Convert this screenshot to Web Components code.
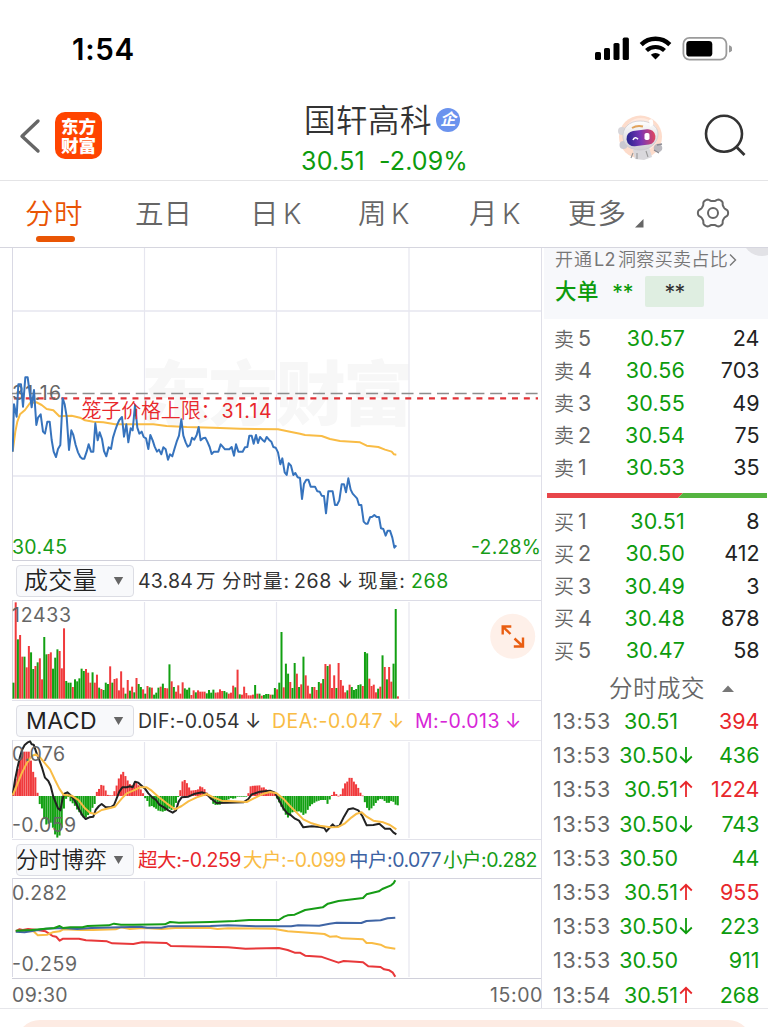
<!DOCTYPE html>
<html lang="zh-CN">
<head>
<meta charset="utf-8">
<title>国轩高科 分时</title>
<style>
html,body{margin:0;background:#fff}
body{width:768px;height:1027px;overflow:hidden;font-family:Inter,"Noto Sans CJK SC",sans-serif;color:#333}
</style>
</head>
<body>
<stock-page></stock-page>
<script>
const define=(name,css,html,after)=>customElements.define(name,class extends HTMLElement{
  connectedCallback(){
    if(this.shadowRoot)return;
    const root=this.attachShadow({mode:'open'});
    root.innerHTML='<style>*{box-sizing:border-box}'+css+'</style>'+(typeof html==='function'?html(this):html);
    if(after)after(this,root);
  }
});

/* Text tracked so that it fills a fixed width */
define('fit-text',':host{display:inline-block;white-space:nowrap;flex:none}','<slot></slot>',el=>{
  const w=+el.getAttribute('w'),r=document.createRange();
  r.selectNodeContents(el);
  const nat=r.getBoundingClientRect().width,n=[...el.textContent].length;
  el.style.letterSpacing=((w-nat)/n).toFixed(3)+'px';
  el.style.width=w+'px';
});
const ft=(t,w,x=0,st='')=>`<fit-text w="${w}" style="margin-left:${x}px;${st}">${t}</fit-text>`;

define('status-bar',`:host{display:flex;height:96px;padding:1px 36px 0 72px;align-items:center;justify-content:space-between;color:#000;font-weight:600;font-size:29.5px}
svg{display:block}`,
`${ft('1:54',63)}<svg width="138" height="26" viewBox="594 36 138 26">
<rect x="595" y="52" width="6" height="8" rx="1.6"/><rect x="604" y="48" width="6" height="12" rx="1.6"/><rect x="613.5" y="43" width="6" height="17" rx="1.6"/><rect x="622.7" y="37.6" width="6.2" height="22.4" rx="1.6"/>
<path d="M641.2 44.6a20.5 20.5 0 0 1 28.6 0" fill="none" stroke="#000" stroke-width="4.4"/><path d="M646.5 50.6a13 13 0 0 1 18 0" fill="none" stroke="#000" stroke-width="4.2"/><path d="M650.8 54.7a7 7 0 0 1 9.4 0L655.5 59.6z"/>
<rect x="683.4" y="37.8" width="43" height="21.8" rx="6" fill="#fff" stroke="#9b9b9b" stroke-width="1.8"/><rect x="686.3" y="41" width="26" height="15.6" rx="3.4"/><path d="M729 45.3q3.4 1 3.4 3.6t-3.4 3.6z" fill="#9b9b9b"/></svg>`);

define('app-logo',`:host{display:grid;width:47px;height:47px;border-radius:10px;background:#ff4400;color:#fff;font-weight:900;font-size:17.5px;line-height:19px;align-content:center;justify-content:center;padding-bottom:0}`,
`${ft('东方',35)}${ft('财富',35)}`);

define('quote-header',`:host{display:flex;height:85px;border-bottom:1px solid #e4e4e6;padding-left:19px;align-items:flex-start}
svg{display:block;flex:none}.back{margin-top:22px}app-logo{margin:16px 0 0 14px;flex:none}
.mid{margin-left:198px;width:170px;flex:none}
.name{display:flex;align-items:center;font-size:31.5px;font-weight:350;height:46px;color:#333;padding-left:4px}
.name fit-text{margin-top:-2px!important}
.badge{width:24px;height:24px;border-radius:50%;background:#6b93ee;color:#fff;font-size:16px;font-weight:700;line-height:23px;text-align:center;margin:2px 0 0 4px;flex:none;font-style:italic}
.px{display:flex;font-size:25px;line-height:32px;color:#0d9b0d;padding:3px 0 0 1px}
.bot{margin:17px 0 0 147px}.sea{margin:18px 0 0 38px}`,
`<svg class="back" width="22" height="36" viewBox="20 118 22 36"><path d="M39 121 23 136.300 39 151" fill="none" stroke="#666" stroke-width="3.400" stroke-linecap="round" stroke-linejoin="round"/></svg>
<app-logo></app-logo>
<div class="mid"><div class="name">${ft('国轩高科',128)}<span class="badge">企</span></div>
<div class="px">${ft('30.51',64)}${ft('-2.09%',89,14)}</div></div>
<svg class="bot" width="48" height="48" viewBox="617 112 48 48"><defs><linearGradient id="v" x1="0" x2="1"><stop offset="0" stop-color="#26238f"/><stop offset=".5" stop-color="#7a36b4"/><stop offset="1" stop-color="#e0455f"/></linearGradient><linearGradient id="h" x1="0" x2="0" y1="0" y2="1"><stop offset="0" stop-color="#fff"/><stop offset="1" stop-color="#cfcdd2"/></linearGradient></defs>
<circle cx="640.500" cy="136" r="21.500" fill="#fddccb"/><circle cx="641" cy="134" r="17" fill="#ffe9de"/>
<path d="M633 149l16-3 3 10-8 3-9-1z" fill="#d9d8dc"/><path d="M633 152l-2 5M637 152v6M646 150l2 6" stroke="#999" stroke-width="1.100"/>
<circle cx="622" cy="130" r="4" fill="#d8d6da"/><circle cx="623.500" cy="144" r="4" fill="#cbc9d0"/>
<path d="M623 137c-1-10 6-17 17-17 10 0 18 5 18 13 0 9-8 16-18 16-9 0-16-4-17-12z" fill="url(#h)" stroke="#c9c6cb" stroke-width=".7"/>
<path d="M649 119q5-3 4 5l-3 2z" fill="#fff"/><path d="M632 127q5-3 11-1.500" fill="none" stroke="#e1a35c" stroke-width="2"/>
<rect x="626.500" y="129" width="29" height="15.500" rx="7.500" fill="url(#v)" transform="rotate(-7 641 137)"/>
<path d="M633 139q2-4 5 -.7" fill="none" stroke="#fff" stroke-width="1.600"/><rect x="644.500" y="132" width="5" height="7" rx="1.800" fill="#fff"/>
<circle cx="658" cy="147" r="4.300" fill="#b9b8be"/><path d="M657 144l5-1M654 149l5 3" stroke="#8b8a92" stroke-width="1.300"/></svg>
<svg class="sea" width="44" height="44" viewBox="703 114 44 44"><circle cx="724" cy="133.800" r="18" fill="none" stroke="#333" stroke-width="2.600"/><path d="M737 147.500 744.500 155" stroke="#333" stroke-width="2.800"/></svg>`);

define('period-tabs',`:host{display:flex;height:67px;border-bottom:1.500px solid #d6d6df;padding-left:25px;font-size:28.5px;font-weight:350;color:#666;line-height:65px;align-items:flex-start}
.on{display:grid;color:#e95504;width:58px;height:64px;grid-template-rows:55px 6px}.on i{width:39px;height:6px;border-radius:3px;background:#e95504;margin-left:11px}
.on fit-text{line-height:65px;height:55px}svg{display:block;flex:none}`,
`<div class="on">${ft('分时',58)}<i></i></div>${ft('五日',57,52)}${ft('日',28,58)}${ft('K',20,5)}${ft('周',28,55)}${ft('K',20,5)}${ft('月',28,58)}${ft('K',20,5)}${ft('更多',59,46)}
<svg width="9" height="9" viewBox="0 0 9 9" style="margin:38px 0 0 8px"><path d="M8.500 0v8.500H0z" fill="#666"/></svg>
<svg width="36" height="36" viewBox="-18 -18 36 36" style="margin:14px 0 0 51px"><path id="g" fill="none" stroke="#666" stroke-width="2"/><circle r="5" fill="none" stroke="#666" stroke-width="2"/></svg>`,
(el,root)=>{let d='';for(let i=0;i<=96;i++){const a=i/96*2*Math.PI,c=Math.cos(6*a),r=13.7+1.4*Math.tanh(1.5*c)/Math.tanh(1.5);d+=(i?'L':'M')+(r*Math.cos(a)).toFixed(2)+' '+(r*Math.sin(a)*.97).toFixed(2);}
root.getElementById('g').setAttribute('d',d+'z');});

/* ---------- chart data, in thirds of a pixel ---------- */
const PRICE='38,620 42,478 50,515 55,418 63,418 69,485 76,397 83,397 90,450 95,487 102,435 109,540 114,518 122,508 129,560 135,566 142,530 149,530 155,585 161,620 168,636 174,612 181,600 188,460 194,478 200,515 207,615 214,556 220,570 227,600 234,622 241,636 247,641 253,641 260,620 266,598 273,620 280,620 286,535 293,586 299,562 306,582 312,618 319,634 326,607 333,612 339,578 346,555 352,538 358,525 366,516 372,575 379,538 385,592 392,550 398,556 405,480 412,548 418,566 425,560 431,576 438,580 445,612 451,570 458,586 464,605 471,620 477,614 484,628 490,607 497,613 504,644 510,628 517,634 524,610 530,590 537,572 544,523 550,572 557,592 563,605 570,600 576,578 583,584 590,570 596,546 602,586 609,580 616,578 622,590 629,606 635,627 642,620 655,620 662,598 668,605 675,613 688,613 695,606 702,632 708,598 715,620 728,620 735,607 742,606 748,572 755,572 761,596 768,570 774,594 780,576 787,584 794,590 800,576 807,584 814,590 820,606 827,608 834,622 841,658 847,640 854,682 860,690 866,655 873,662 880,690 886,684 893,697 900,699 906,762 912,716 919,704 925,704 932,725 945,725 952,739 959,740 965,752 972,753 978,805 985,739 998,739 1005,780 1011,780 1018,766 1025,718 1032,718 1038,742 1045,700 1052,734 1058,746 1071,760 1077,780 1084,780 1091,830 1097,836 1103,836 1110,817 1117,815 1123,810 1130,816 1137,816 1143,850 1150,852 1157,872 1163,857 1170,857 1177,878 1183,908 1189,901';
const AVG='38,620 46,560 52,530 60,508 75,495 90,474 110,472 125,480 140,492 160,496 178,514 215,512 240,518 255,526 280,530 310,532 345,538 460,538 500,543 560,546 640,548 720,551 834,553 870,560 900,566 915,570 965,573 990,582 1020,588 1080,592 1100,602 1135,606 1155,614 1175,620 1182,628 1189,629';
const VOL='G48 R289 G178 R191 R126 G126 R94 R158 G139 G89 R98 G109 R121 R58 G185 G133 R134 R139 G90 G123 G148 R143 R91 R211 G53 G48 G48 R35 G58 G52 G61 G90 G83 R89 R78 R48 G79 R48 R72 G33 R29 G26 G48 G44 R97 G48 R59 R61 R25 R82 R33 G15 R56 G24 R36 G19 R62 G44 G35 R28 G15 R38 G34 R33 G12 G18 G33 R36 G45 R32 R31 G103 R52 G35 R21 R40 R15 R49 G31 G27 G33 R11 R25 G19 R25 R21 R21 R21 G16 G26 G18 G27 R18 R19 R28 R23 G23 G19 R15 R18 R39 G34 R87 G13 R12 R36 R17 R10 R10 R12 G41 R15 G15 R9 G11 G14 G14 R12 G12 G32 R28 G48 G200 R34 G105 G75 R50 G32 G107 R75 G35 R43 G126 R70 R39 R15 G35 R35 R26 G50 R46 G59 R104 G98 R103 R32 R70 G32 R107 R56 R39 R19 G25 R42 G35 G26 G29 G41 G43 R38 G140 G136 R60 R38 R42 R19 G30 R36 G130 R95 G58 R95 R51 G105 G269 R7';
const HIST='38,10 45,54 52,85 58,110 65,133 85,133 91,105 98,69 104,56 111,6 117,-24 124,-38 130,-68 137,-86 150,-80 157,-96 163,-115 170,-125 177,-118 183,-95 190,-34 197,-5 203,-3 210,-17 216,-22 223,-30 230,-42 237,-50 244,-60 250,-66 257,-64 263,-56 270,-46 276,-34 283,-22 289,16 296,22 302,34 309,31 315,16 322,2 335,2 341,14 348,32 354,52 361,65 368,73 374,60 381,46 387,36 394,32 400,36 407,40 414,32 420,20 427,8 433,-6 440,-15 446,-32 453,-30 460,-34 466,-38 473,-44 486,-47 500,-42 506,-38 513,-42 519,-34 526,-20 532,-4 539,18 546,46 552,48 559,38 566,24 572,16 585,18 592,20 599,30 605,26 612,20 618,10 625,-2 632,-12 638,-24 645,-27 658,-26 664,-20 671,-16 678,-18 684,-10 691,-6 697,-8 704,-7 711,0 717,-2 737,-2 744,10 750,30 777,32 783,25 790,26 796,20 803,18 810,14 816,10 823,6 829,-8 836,-20 843,-34 850,-46 856,-58 863,-66 869,-54 876,-48 896,-46 902,-50 909,-58 915,-52 922,-40 928,-30 935,-24 948,-16 961,-12 975,-12 981,-25 988,-8 994,4 1001,14 1008,4 1014,0 1021,6 1027,24 1034,40 1041,44 1047,56 1054,54 1060,42 1067,34 1074,22 1080,8 1087,0 1094,-24 1100,-38 1107,-44 1113,-36 1120,-28 1126,-20 1133,-12 1140,-8 1146,-10 1153,-16 1160,-22 1166,-20 1173,-14 1179,-18 1186,-28 1200,-28';
const DIF='38,285 45,240 52,205 60,170 66,150 74,135 82,128 90,124 95,133 101,134 110,160 118,180 127,206 135,233 145,243 152,258 160,290 168,310 174,325 181,331 187,300 192,282 202,277 212,286 225,303 237,328 247,346 257,357 268,352 280,350 287,330 297,318 305,312 317,322 332,322 342,315 350,295 358,275 367,262 380,262 390,259 398,262 405,245 415,248 425,257 435,266 445,280 457,292 468,300 478,314 492,322 505,331 518,338 528,331 536,305 545,292 565,290 585,281 607,277 620,282 632,295 650,309 680,308 730,307 745,297 755,283 780,275 810,272 825,278 837,300 850,325 862,340 872,345 885,356 897,362 910,382 935,379 960,381 973,384 979,394 988,384 998,373 1005,380 1018,378 1032,350 1045,328 1060,325 1075,331 1087,348 1100,376 1120,375 1138,371 1155,386 1170,386 1180,397 1189,403';
const DEA='38,285 50,258 65,220 80,190 95,168 107,163 120,172 135,190 150,208 165,240 178,266 190,284 215,287 235,300 255,325 270,338 285,342 305,330 330,324 345,320 365,296 380,280 400,272 420,262 440,262 455,272 475,290 500,310 525,328 545,318 565,304 590,292 620,282 640,292 665,302 700,304 740,306 760,296 790,281 810,276 830,280 850,296 870,318 890,338 910,358 935,370 960,377 990,382 1015,381 1035,370 1055,352 1070,341 1085,337 1100,350 1120,362 1150,367 1170,375 1189,388';
const FLOW={
 '#e8383a':'45,274 55,268 65,270 80,267 100,269 130,274 150,288 160,290 170,302 180,296 225,296 245,301 305,304 320,310 380,312 405,307 475,309 487,318 650,322 700,326 795,324 820,330 840,338 855,338 870,347 915,350 965,368 980,363 1015,365 1035,367 1050,379 1085,381 1095,388 1110,391 1120,398 1127,410',
 '#f9bc45':'45,274 95,273 108,286 135,284 150,277 170,274 180,268 230,270 265,270 330,268 345,262 370,267 410,264 460,267 500,264 600,264 620,267 650,265 780,266 820,274 880,278 925,282 940,290 960,289 975,295 1035,298 1045,309 1060,309 1085,314 1100,322 1127,326',
 '#3f65a5':'45,275 70,277 130,266 180,264 220,267 260,264 400,260 420,263 460,263 480,259 600,258 650,256 740,259 830,259 850,256 910,257 940,251 960,248 1030,249 1045,243 1085,241 1105,235 1127,233',
 '#169c16':'45,272 90,270 130,266 155,264 170,258 180,264 200,262 235,262 250,258 310,256 325,251 345,254 380,254 470,253 485,246 510,248 600,246 670,243 710,240 795,240 810,230 820,226 840,224 870,210 920,202 935,191 965,183 1035,174 1045,163 1080,154 1090,147 1115,136 1122,130 1127,121'};
const line=(p,c,w=6)=>`<polyline points="${p}" fill="none" stroke="${c}" stroke-width="${w}" stroke-linejoin="round"/>`;
const vgrid=(y1,y2)=>[144.5,276.5,409].map(x=>`<path d="M${x} ${y1}V${y2}" stroke="#e6e6ef" stroke-width="1.2"/>`).join('');
const label=(x,y,w,t,c='#666',s=19.5)=>`<text x="${x}" y="${y}" textLength="${w}" font-size="${s}" fill="${c}">${t}</text>`;
const svgCss=':host{display:block}svg{display:block}';

define('price-chart',svgCss,()=>`<svg width="530" height="313" viewBox="12 248 530 313">
<text x="141" y="420" textLength="272" font-size="70" font-weight="900" fill="#f7f7f7">东方财富</text>
${vgrid(248,560)}<path d="M12 311H541M12 476H541" stroke="#e6e6ef" stroke-width="1.300"/><path d="M12.500 248V561" stroke="#d9d9e4"/><path d="M12 560.500H541" stroke="#d0d0da"/>
<path d="M12 393.500H538" stroke="#8c8c8c" stroke-width="1.300" stroke-dasharray="12 5.720" stroke-dashoffset="0.300"/>
<path d="M12 398.300H538" stroke="#e23338" stroke-width="2.200" stroke-dasharray="6 5.860" stroke-dashoffset="10"/>
${label(12,399.5,49,'31.16')}
<g transform="translate(0 245) scale(.33333)">${line(AVG,'#f9bc45')}${line(PRICE,'#3673bd')}</g>
<text x="81.500" y="418" textLength="139" font-size="20" font-weight="350" fill="#e8272b">笼子价格上限：</text>${label(221.5,418,50,'31.14','#e8272b')}
${label(12,554,55,'30.45','#169c16')}${label(471,554,70,'-2.28%','#169c16')}</svg>`);

define('volume-chart',svgCss,()=>`<svg width="530" height="101" viewBox="12 600 530 101">${vgrid(602,699)}<path d="M12 600.500H541" stroke="#dcdce6"/><path d="M12 700.500H541" stroke="#e2e2ea"/><path d="M12.500 600V699" stroke="#d9d9e4"/>
<g transform="translate(0 560) scale(.33333)">${VOL.split(' ').map((v,i)=>{const h=+v.slice(1);return `<rect x="${(37.5+i*6.59).toFixed(1)}" y="${416-h}" width="6" height="${h}" fill="${v[0]=='G'?'#12a012':'#f03a3c'}"/>`}).join('')}</g>
${label(12,621.5,59,'12433')}
<circle cx="512.700" cy="636.300" r="22.500" fill="#fef0e9"/><path d="M502.700 634.500V626.500H511.300M503 626.800 510.500 634M514.500 638.500 522.500 646M523 637.500V646.500H513.800" fill="none" stroke="#e95e12" stroke-width="2.400"/></svg>`);

define('macd-chart',svgCss,()=>{
 const k=HIST.split(' ').map(s=>s.split(',').map(Number));let b='';
 for(let i=0;i<176;i++){const x=38+i*6.59;let j=1;while(j<k.length-1&&k[j][0]<x)j++;
  const[a,ha]=k[j-1],[c,hc]=k[j],h=ha+(hc-ha)*(x-a)/(c-a);
  b+=`<rect x="${(x-.9).toFixed(1)}" y="${(h>0?288-h:288).toFixed(1)}" width="6.1" height="${Math.max(2,Math.abs(h)).toFixed(1)}" fill="${h>0?'#f03a3c':'#12a012'}"/>`;}
 return `<svg width="530" height="100" viewBox="12 740 530 100">${vgrid(742,838)}<path d="M12 740.500H541" stroke="#d4d4de" transform="translate(0 -.5)" /><path d="M12 839.500H541" stroke="#e2e2ea"/><path d="M12.500 740V838" stroke="#d9d9e4"/>
<g transform="translate(0 700) scale(.33333)">${b}${line(DIF,'#222')}${line(DEA,'#f9bc45')}</g>${label(12,761,53,'0.076')}${label(12,832,64,'-0.059')}</svg>`});

define('flow-chart',svgCss,()=>`<svg width="530" height="101" viewBox="12 878 530 101">${vgrid(881,977)}<path d="M12 878.500H541" stroke="#d4d4de"/><path d="M12 978.500H541" stroke="#d0d0da"/><path d="M12.500 878V977" stroke="#d9d9e4"/>
<g transform="translate(0 840) scale(.35075 .33333)">${Object.entries(FLOW).map(([c,p])=>line(p,c)).join('')}</g>${label(12,900,55,'0.282')}${label(12,971,65,'-0.259')}</svg>`);

define('indicator-row',`:host{display:flex;height:39px;align-items:center;padding-left:4px;font-size:19.5px;line-height:32px;color:#333}
.sel{width:118px;height:32px;border:1.500px solid #dcdde4;border-radius:4px;background:#f8f9fb;display:flex;align-items:center;flex:none;color:#222;position:relative}
.sel svg{position:absolute;right:9px;top:10px}::slotted(*){flex:none}`,
el=>`<div class="sel"><slot name="sel"></slot><svg width="11" height="10" viewBox="0 0 11 10"><path d="M.8 1h9.400L5.500 9z" fill="#666"/></svg></div><slot></slot>`);
const sel=(t,w,x,s,wt=400)=>`<fit-text slot="sel" w="${w}" style="margin-left:${x}px;font-size:${s}px;font-weight:${wt}">${t}</fit-text>`;
/* 390 keeps the Latin digits regular while the CJK glyphs take the lighter face */
const L='font-weight:390',R='color:#e8272b;'+L,Y='color:#f9bc45;'+L,G='color:#169c16;'+L,M='color:#d726d7;'+L,B='color:#3c62a3;'+L;

define('chart-column',`:host{display:block;width:542px;padding-left:12px;border-right:1.500px solid #dfdfe8;height:760px}
.axis{display:flex;justify-content:space-between;font-size:19.5px;color:#666;line-height:33px;height:29px}`,
()=>`<price-chart></price-chart>
<indicator-row>${sel('成交量',73,7,24,350)}${ft('43.84',55,4)}${ft('万',20,3,L)}${ft('分时量:',68,6,L)}${ft('268',38,4)}${ft('↓',16,5,L)}${ft('现量:',48,5,L)}${ft('268',38,5,G)}</indicator-row>
<volume-chart></volume-chart>
<indicator-row>${sel('MACD',71,9,23)}${ft('DIF:-0.054',102,4,L)}${ft('↓',16,5,L)}${ft('DEA:-0.047',111,11,Y)}${ft('↓',16,5,Y)}${ft('M:-0.013',85,11,M)}${ft('↓',16,5,M)}</indicator-row>
<macd-chart></macd-chart>
<indicator-row style="height:38px;padding-top:1px">${sel('分时博弈',91,-1,22.5,350)}${ft('超大:-0.259',103,4,R)}${ft('大户:-0.099',103,2,Y)}${ft('中户:0.077',92,3,B)}${ft('小户:0.282',94,2,G)}</indicator-row>
<flow-chart></flow-chart>
<div class="axis">${ft('09:30',56)}${ft('15:00',53,0,'margin-right:-2px')}</div>`);

define('level-row',`:host{display:flex;height:32.25px;align-items:center;font-size:21.5px;color:#666;padding:0 8.500px 0 12px}
.p{width:93px;text-align:right;color:#0d9b0d;letter-spacing:.15px}.q{flex:1;text-align:right;color:#222}.c{font-weight:350;width:24px;font-size:20px}.n{width:14px}`,
el=>`<span class="c">${el.getAttribute('side')}</span><span class="n">${el.getAttribute('n')}</span><span class="p">${el.getAttribute('price')}</span><span class="q">${el.getAttribute('qty')}</span>`);

define('tick-row',`:host{display:flex;height:34.2px;align-items:center;font-size:21.5px;line-height:26px;color:#666;padding:0 8.500px 0 11px}
.p{width:67px;text-align:right;color:#0d9b0d}.a{width:15px;display:block}.q{flex:1;text-align:right}`,
el=>{const a=el.getAttribute('dir'),c=a=='u'?'#e8272b':'#0d9b0d';return `${ft(el.getAttribute('time'),58)}<span class="p">${el.getAttribute('price')}</span><svg class="a" width="15" height="20" viewBox="0 0 15 20">${a?`<path d="${a=='u'?'M8 18V3M2.200 8.500 8 2.800 13.800 8.500':'M8 2V17M2.200 11.500 8 17.200 13.800 11.500'}" fill="none" stroke="${c}" stroke-width="1.800"/>`:''}</svg><span class="q" style="color:${el.getAttribute('c')=='r'?'#e8272b':'#0d9b0d'}">${el.getAttribute('qty')}</span>`});

define('order-book',`:host{display:block;width:226px;height:760px}
.top{margin-left:2px;height:71px;background:#f7f8fb;position:relative;padding:0 0 0 11px;overflow:hidden}
.top .l{display:flex;font-size:18px;line-height:24px;height:28px;color:#777;font-weight:350;align-items:center;padding-bottom:5px}
.corner{position:absolute;right:-14px;top:-32px;width:40px;height:40px;border-radius:50%;background:#e2e2e6}
.b{display:flex;color:#0d9b0d;font-size:21.5px;height:31px;align-items:center}
.box{width:59px;height:31px;background:#dfeee1;border-radius:2px;color:#333;margin-left:12px;display:flex;align-items:center;justify-content:center}
.asks{padding-top:3px;height:174px}.bar{display:block;margin-left:5px}.bids{padding-top:7px;height:170px}
.h{display:flex;height:36px;align-items:center;color:#666;font-size:23.5px;line-height:30px;font-weight:350;padding:5px 0 0 67px}`,
()=>`<div class="top"><i class="corner"></i><div class="l">${ft('开通',38)}${ft('L2',22,1,'font-weight:400')}${ft('洞察买卖占比',110,2)}<svg width="10" height="14" viewBox="0 0 10 14"><path d="M2 1.500 7.500 7 2 12.500" fill="none" stroke="#777" stroke-width="1.400"/></svg></div>
<div class="b">${ft('大单',44,0,'font-weight:500;margin-top:-4px')}${ft('**',21,13,'font-weight:500')}<span class="box">${ft('**',20)}</span></div></div>
<div class="asks">${[['5','30.57','24'],['4','30.56','703'],['3','30.55','49'],['2','30.54','75'],['1','30.53','35']].map(r=>`<level-row side="卖" n="${r[0]}" price="${r[1]}" qty="${r[2]}"></level-row>`).join('')}</div>
<svg class="bar" width="220" height="5" viewBox="0 0 220 5"><path d="M0 0h136l-5 5H0z" fill="#e8464a"/><path d="M136 0h84v5h-89z" fill="#55b440"/></svg>
<div class="bids">${[['1','30.51','8'],['2','30.50','412'],['3','30.49','3'],['4','30.48','878'],['5','30.47','58']].map(r=>`<level-row side="买" n="${r[0]}" price="${r[1]}" qty="${r[2]}"></level-row>`).join('')}</div>
<div class="h">${ft('分时成交',96)}<svg width="12" height="7" viewBox="0 0 12 7" style="margin-left:17px"><path d="M0 7 6 .5 12 7z" fill="#777"/></svg></div>
<div>${[['13:53','30.51','','394','r'],['13:53','30.50','d','436','g'],['13:53','30.51','u','1224','r'],['13:53','30.50','d','743','g'],['13:53','30.50','','44','g'],['13:53','30.51','u','955','r'],['13:53','30.50','d','223','g'],['13:53','30.50','','911','g'],['13:54','30.51','u','268','g']].map(r=>`<tick-row time="${r[0]}" price="${r[1]}" dir="${r[2]}" qty="${r[3]}" c="${r[4]}"></tick-row>`).join('')}</div>`);

define('stock-page',`:host{display:block;width:768px;height:1027px;overflow:hidden;background:#fff}
main{display:grid;grid-template-columns:542px 226px;height:760px}
footer{border-top:1.500px solid #e6e6ea;padding:11px 16px 0}footer div{height:40px;background:#fdebe3;border-radius:24px 24px 0 0}`,
`<status-bar></status-bar><quote-header></quote-header><period-tabs></period-tabs><main><chart-column></chart-column><order-book></order-book></main><footer><div></div></footer>`);
</script>
</body>
</html>
